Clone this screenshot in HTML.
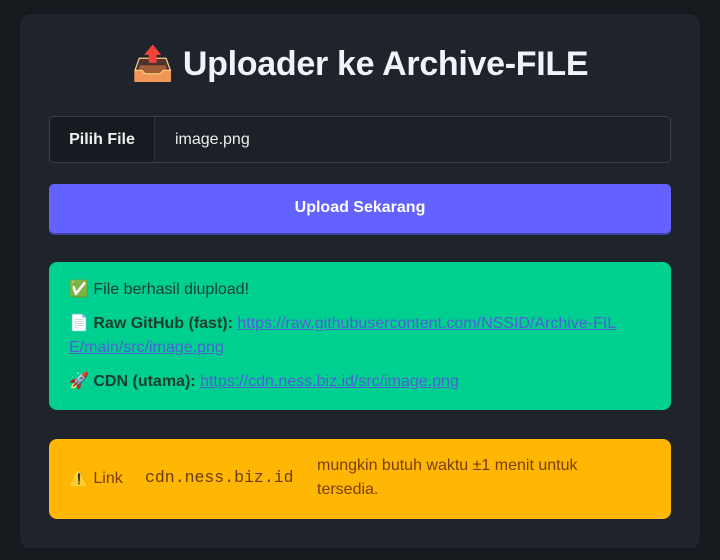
<!DOCTYPE html>
<html><head><meta charset="utf-8"><style>
*{box-sizing:border-box;margin:0;padding:0}
body{width:720px;height:560px;background:#161a1f;font-family:"Liberation Sans",sans-serif;overflow:hidden}
.card{position:absolute;left:20px;top:14px;width:680px;height:534px;background:#1f232b;border-radius:10px}
h1{position:absolute;left:0;width:680px;top:30px;text-align:center;color:#eef4fa;font-size:34px;font-weight:bold;letter-spacing:-0.3px}
.inp{position:absolute;left:29px;top:102px;width:622px;height:47px;border:1px solid #3a3f47;border-radius:5px;background:#1c2027;overflow:hidden}
.inp .b{position:absolute;left:0;top:0;width:105px;height:100%;background:#171b21;color:#f0f0f0;font-weight:bold;font-size:16px;line-height:45px;text-align:center;border-right:1px solid #2c3038}
.inp .f{position:absolute;left:125px;top:0;line-height:45px;color:#eee;font-size:16px}
.btn{position:absolute;left:29px;top:170px;width:622px;height:49px;background:#6361ff;border-radius:5px;box-shadow:0 2px 0 #3f44a8;color:#fff;font-weight:bold;font-size:16px;text-align:center;line-height:48px}
.ok{position:absolute;left:29px;top:248px;width:622px;height:148px;background:#00d08f;border-radius:8px;padding:16px 20px;color:#1b3d2f;font-size:16px;line-height:24px}
.ok p{margin-bottom:10px;white-space:nowrap}
.ok a{color:#4f5fd8;text-decoration:underline}
.warn{position:absolute;left:29px;top:425px;width:622px;height:80px;background:#ffb703;border-radius:8px;color:#7a3e00;font-size:16px}
.warn .l{position:absolute;left:20px;top:29px}
.warn code{position:absolute;left:96px;top:29px;font-family:"Liberation Mono",monospace;font-size:16.5px;color:#6a3c00}
.warn .r{position:absolute;left:268px;top:15px;line-height:24px;width:300px}
</style></head><body>
<div class="card">
<h1>📤 Uploader ke Archive-FILE</h1>
<div class="inp"><div class="b">Pilih File</div><div class="f">image.png</div></div>
<div class="btn">Upload Sekarang</div>
<div class="ok">
<p>✅ File berhasil diupload!</p>
<p>📄 <b>Raw GitHub (fast):</b> <a>https://raw.githubusercontent.com/NSSID/Archive-FIL<br>E/main/src/image.png</a></p>
<p>🚀 <b>CDN (utama):</b> <a>https://cdn.ness.biz.id/src/image.png</a></p>
</div>
<div class="warn"><span class="l">⚠️ Link</span><code>cdn.ness.biz.id</code><span class="r">mungkin butuh waktu ±1 menit untuk tersedia.</span></div>
</div>
</body></html>
